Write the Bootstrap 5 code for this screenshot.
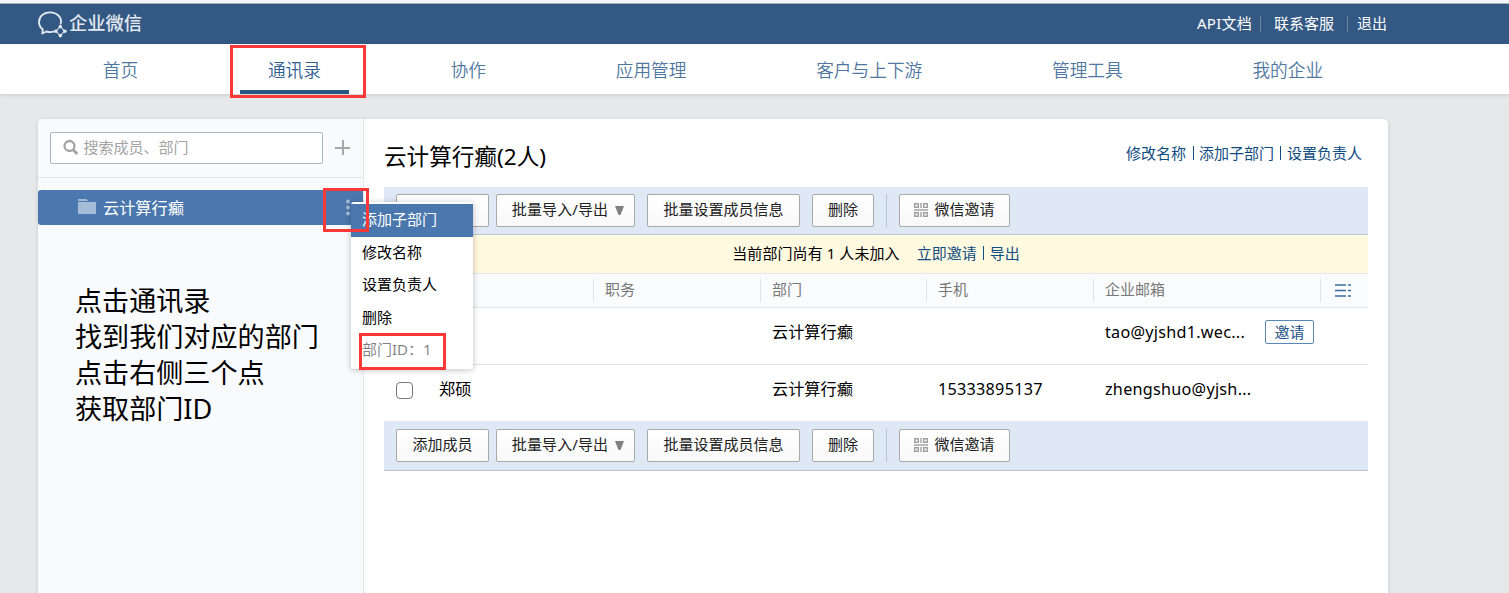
<!DOCTYPE html>
<html lang="zh-CN">
<head>
<meta charset="utf-8">
<meta name="viewport" content="width=device-width, initial-scale=1">
<title>企业微信 - 通讯录</title>
<link rel="stylesheet" href="https://cdn.jsdelivr.net/npm/bootstrap@5.3.0/dist/css/bootstrap.min.css">
<style>
body{font-family:"Noto Sans","Noto Sans CJK SC",sans-serif;font-size:15px;line-height:22px;color:#000;background:#e7e8ea;height:593px;overflow:hidden}
a{text-decoration:none;color:#0f4c81}
.text-line{white-space:nowrap}
.topbar{height:44px;background:#335883;border-top:3px solid #f3f4f5;color:#fff;box-shadow:inset 0 1px #a5adb5}
.page-wrap{width:1350px;margin-left:38px}
.brand-name{font-size:18.3px;color:#e1e8f0;font-weight:500;line-height:24px;padding-bottom:2px}
.top-links{padding:0 1px 2px 0}
.top-links a{color:#fff}
.top-sep{width:1px;height:16px;background:#71869f;margin-top:2px}
.mainnav{height:51px;background:#fff;border-bottom:1px solid #d5d7d9;box-shadow:0 1px 3px rgba(0,0,0,.08)}
.mainnav .nav-link{height:50px;padding:0 28px;font-size:17.7px;line-height:52px;font-weight:350;color:#4f779f;border-radius:0;white-space:nowrap}
.mainnav .nav-link.active{color:#335f92;border-bottom:4px solid #2a5682}
.mark-box{position:absolute;border:3px solid #fa3838;z-index:30;pointer-events:none}
.mark-nav{left:-10px;top:1px;width:136px;height:53px}
.mark-dots{left:285px;top:-2px;width:46px;height:44px}
.mark-id{left:8px;top:131px;width:87px;height:37px}
.panel{height:480px;margin-top:24px;background:#fff;border-radius:5px 5px 0 0;box-shadow:0 1px 4px rgba(0,0,0,.14)}
.side{width:326px;background:#f9fafc;border-right:1px dotted #d5d8dc;border-top-left-radius:5px}
.side-head{height:59px;padding:0 12px;border-bottom:1px solid #e2e5e9}
.search{width:273px;height:32px;border:1px solid #a8b6c6;border-radius:2px;background:#fff;color:#a3a3a3;padding:0 0 2px 12px}
.dept{height:35px;margin-top:12px;background:#4a77ad;color:#fff;font-size:16.2px;border-radius:3px 0 0 3px;width:325px}
.note{margin:58px 0 0 37px;font-size:27.1px;line-height:36px}
.ctx{position:absolute;left:313px;top:12px;width:122px;height:167px;background:#fff;border-radius:3px;padding-top:2px;box-shadow:0 1px 6px rgba(0,0,0,.25);z-index:20;color:#000}
.ctx-item{height:32.5px;line-height:31px;padding-left:11px;font-size:15px;white-space:nowrap}
.ctx-item.on{background:#4a77ad;color:#fff}
.main{padding:0 20px}
.main-head{height:68px}
.main-title{font-size:22.6px;line-height:30px;font-weight:400;margin:8px 0 0}
.head-links{margin:0 6px 0 0}
.link-sep{width:1px;height:14px;background:#0f4c81}
.tools{background:#dfe8f5;border-bottom:1px solid #b7c6d6;padding-left:12px}
.tools.upper{height:48px;padding-top:7px}
.tools.lower{height:50px;padding-top:8px}
.tool{height:33px;border:1px solid #a9a9a9;border-radius:2px;background:linear-gradient(#fff,#f8f8f8);color:#222;font-size:15px;line-height:22px;padding:0 0 3px;white-space:nowrap}
.w-add{width:93px;margin-right:7px}.w-imp{width:139px;margin-right:12px;padding-left:5px;letter-spacing:.1px}.w-set{width:153px;margin-right:12px}.w-del{width:62px;margin-right:12px}.w-inv{width:111px}
.tool-sep{width:1px;height:33px;background:#b4c4d4;margin-right:12px}
.tip{height:39px;background:#fff9e0;border-bottom:1px solid #e3e5e8;padding-bottom:3px}
.grid-row{display:grid;grid-template-columns:43px 166px 167px 166px 167px 227px 48px;align-items:center}
.grid-head{height:34px;background:#fafbfd;border-bottom:1px solid #e2e4e7;color:#787878}
.grid-head .cell{border-left:1px solid #e1e3e6;height:23px;line-height:20px;padding-left:11px}
.grid-body{font-size:16.2px}
.grid-body .cell{padding-left:12px;white-space:nowrap}
.latin{letter-spacing:.26px}
.row-one{height:57px;border-bottom:1px solid #e2e4e7;padding-bottom:8px}
.row-two{height:56px;padding-bottom:8px}
.invite{width:49px;height:24px;line-height:21px;border:1px solid #5b86b3;border-radius:2px;font-size:15px;letter-spacing:0;padding:0;color:#1e5183;background:#fff}
.check-box{width:17px;height:17px;margin:3px 0 0 12px;border:1px solid #767676;border-radius:3px}
</style>
</head>
<body>
<header class="topbar">
  <div class="page-wrap h-100 d-flex align-items-center justify-content-between">
    <div class="d-flex align-items-center">
      <svg width="31" height="28" viewBox="0 0 31 28" fill="none" stroke="#e1e8f0" stroke-linecap="round" stroke-linejoin="round"><path stroke-width="1.900" d="M22.700 13.500C24.500 7.500 18.800 2.400 12 2.400C5.500 2.400 1 6.500 1 12c0 3.200 1.500 5.700 3.800 7.500L4.300 23.500 8.500 21.500c2.700.8 5 .7 7 .2"/><path stroke-width="1.300" d="M20.600 18.300l1.700-1.600 1.700 1.600M25 19.500l1.600 1.700-1.600 1.700M24 24l-1.700 1.600-1.700-1.600M19.600 22.900L18 21.200l1.600-1.700"/><g fill="#e1e8f0" stroke="none"><circle cx="22.300" cy="16.500" r="1.700"/><circle cx="27" cy="21.200" r="1.700"/><circle cx="22.300" cy="25.700" r="1.700"/><circle cx="17.700" cy="21.200" r="1.700"/></g></svg>
      <span class="brand-name">企业微信</span>
    </div>
    <nav class="top-links d-flex align-items-center text-line">
      <a href="#" style="letter-spacing:.25px">API文档</a><span class="top-sep ms-2"></span>
      <a href="#" style="margin-left:13px">联系客服</a><span class="top-sep" style="margin:2px 9px 0 13px"></span>
      <a href="#">退出</a>
    </nav>
  </div>
</header>

<div class="mainnav">
  <nav class="page-wrap nav flex-nowrap justify-content-around">
    <a class="nav-link" href="#">首页</a>
    <a class="nav-link active position-relative" href="#">通讯录<span class="mark-box mark-nav"></span></a>
    <a class="nav-link" href="#">协作</a>
    <a class="nav-link" href="#">应用管理</a>
    <a class="nav-link" href="#">客户与上下游</a>
    <a class="nav-link" href="#">管理工具</a>
    <a class="nav-link" href="#">我的企业</a>
  </nav>
</div>

<div class="page-wrap panel d-flex">
  <aside class="side flex-shrink-0">
    <div class="side-head d-flex align-items-center">
      <div class="search d-flex align-items-center">
        <svg width="17" height="17" viewBox="0 0 17 17" fill="none" stroke="#a3a3a3" style="margin-right:3.500px"><circle cx="6.500" cy="7" r="5" stroke-width="2.300"/><path d="m10.300 11 4 4" stroke-width="3"/></svg>
        <span>搜索成员、部门</span>
      </div>
      <svg class="ms-auto" width="16" height="16" viewBox="0 0 16 16"><path d="M7 0h2v7h6v2H9v6H7V9H0V7h7z" fill="#a6a6a6"/></svg>
    </div>
    <div class="dept position-relative d-flex align-items-center">
      <svg width="18" height="16" viewBox="0 0 18 16" style="margin:0 7px 2px 40px"><path d="M0 0h8.500l1.500 2H0zM0 3h18v12H0z" fill="#a5bbd6"/></svg>
      <span>云计算行癫</span>
      <svg class="ms-auto" width="4" height="17" viewBox="0 0 4 17" fill="#a5bbd6" style="margin-right:13px"><circle cx="2" cy="2.500" r="2"/><circle cx="2" cy="8.500" r="2"/><circle cx="2" cy="14.500" r="2"/></svg>
      <div class="ctx">
        <div class="ctx-item on">添加子部门</div>
        <div class="ctx-item">修改名称</div>
        <div class="ctx-item">设置负责人</div>
        <div class="ctx-item">删除</div>
        <div class="ctx-item text-black-50">部门ID：1</div>
        <span class="mark-box mark-id"></span>
      </div>
      <span class="mark-box mark-dots"></span>
    </div>
    <div class="note text-line">点击通讯录<br>找到我们对应的部门<br>点击右侧三个点<br>获取部门ID</div>
  </aside>

  <main class="main flex-grow-1">
    <div class="main-head d-flex align-items-center justify-content-between">
      <h1 class="main-title">云计算行癫(2人)</h1>
      <div class="head-links d-flex align-items-center">
        <a href="#">修改名称</a><span class="link-sep" style="margin:0 5px 0 7px"></span>
        <a href="#">添加子部门</a><span class="link-sep" style="margin:0 6px"></span>
        <a href="#">设置负责人</a>
      </div>
    </div>

    <div class="tools upper d-flex">
      <button class="btn tool w-add" aria-label="添加成员"></button>
      <button class="btn tool w-imp">批量导入/导出<svg width="9" height="9" viewBox="0 0 9 9" style="margin-left:7px"><path d="M0 0h9L5.500 9h-2z" fill="#808080"/></svg></button>
      <button class="btn tool w-set">批量设置成员信息</button>
      <button class="btn tool w-del">删除</button>
      <span class="tool-sep"></span>
      <button class="btn tool w-inv"><svg width="14" height="14" viewBox="0 0 14 14" fill="none" stroke="#a0a0a0" style="margin:-2px 6px 0 0"><path stroke-width="1.400" d="M.7.7h3.600v3.600H.7zM9.700.7h3.600v3.600H9.700zM.7 9.700h3.600v3.600H.7zM9.700 9.700h3.600v3.600H9.700z"/><path stroke="#bbb" stroke-width="2" d="M7 0v5M7 9v5M0 7h14"/></svg>微信邀请</button>
    </div>

    <div class="tip d-flex align-items-center justify-content-center">
      <span style="letter-spacing:.08px">当前部门尚有 1 人未加入</span>
      <a href="#" style="margin-left:17px">立即邀请</a><span class="link-sep" style="margin:0 6px"></span><a href="#">导出</a>
    </div>

    <div class="grid-row grid-head">
      <span></span><span></span>
      <span class="cell">职务</span><span class="cell">部门</span><span class="cell">手机</span><span class="cell">企业邮箱</span>
      <span class="cell d-flex align-items-center ps-0"><svg width="17" height="13" viewBox="0 0 17 13" style="margin-left:14px" stroke="#3d6c9f" stroke-width="1.400"><path d="M0 1h11M0 6.500h11M0 12h11M13 1h3M13 6.500h3M13 12h3"/></svg></span>
    </div>
    <div class="grid-row grid-body row-one">
      <span></span><span></span><span></span>
      <span class="cell">云计算行癫</span><span></span>
      <span class="cell latin d-flex align-items-center">tao@yjshd1.wec...<button class="btn invite ms-auto" style="margin-right:6px">邀请</button></span>
    </div>
    <div class="grid-row grid-body row-two">
      <input class="form-check-input check-box" type="checkbox" aria-label="选择">
      <span class="cell">郑硕</span><span></span>
      <span class="cell">云计算行癫</span><span class="cell latin">15333895137</span>
      <span class="cell latin">zhengshuo@yjsh...</span>
    </div>

    <div class="tools lower d-flex">
      <button class="btn tool w-add">添加成员</button>
      <button class="btn tool w-imp">批量导入/导出<svg width="9" height="9" viewBox="0 0 9 9" style="margin-left:7px"><path d="M0 0h9L5.500 9h-2z" fill="#808080"/></svg></button>
      <button class="btn tool w-set">批量设置成员信息</button>
      <button class="btn tool w-del">删除</button>
      <span class="tool-sep"></span>
      <button class="btn tool w-inv"><svg width="14" height="14" viewBox="0 0 14 14" fill="none" stroke="#a0a0a0" style="margin:-2px 6px 0 0"><path stroke-width="1.400" d="M.7.7h3.600v3.600H.7zM9.700.7h3.600v3.600H9.700zM.7 9.700h3.600v3.600H.7zM9.700 9.700h3.600v3.600H9.700z"/><path stroke="#bbb" stroke-width="2" d="M7 0v5M7 9v5M0 7h14"/></svg>微信邀请</button>
    </div>
  </main>
</div>
<script src="https://cdn.jsdelivr.net/npm/bootstrap@5.3.0/dist/js/bootstrap.bundle.min.js"></script>
</body>
</html>
